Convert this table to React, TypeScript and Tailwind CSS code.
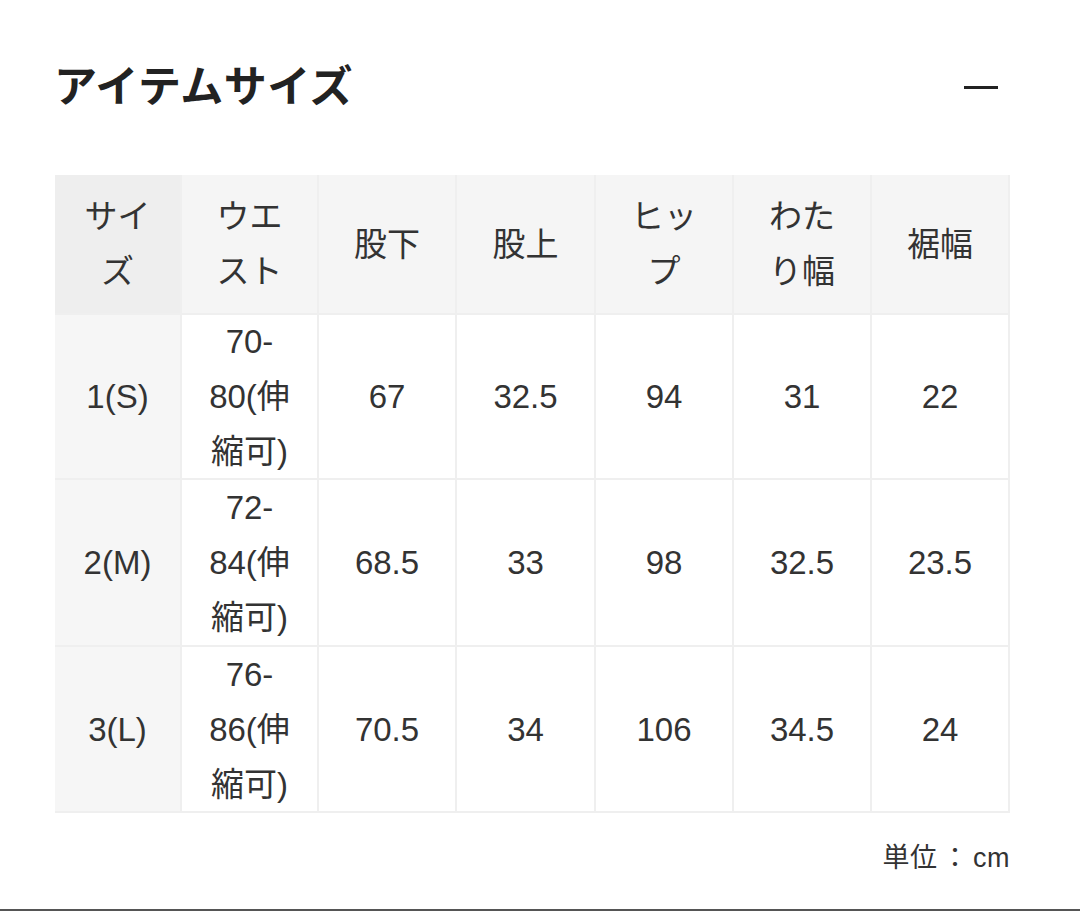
import React from "react";

const FONT = { fontFamily: '"Liberation Sans", "Noto Sans CJK JP", sans-serif' };

const headers: React.ReactNode[] = [
  <>サイ<br />ズ</>,
  <>ウエ<br />スト</>,
  <>股下</>,
  <>股上</>,
  <>ヒッ<br />プ</>,
  <>わた<br />り幅</>,
  <>裾幅</>,
];

const rows: React.ReactNode[][] = [
  ["1(S)", <>70-<br />80(伸<br />縮可)</>, "67", "32.5", "94", "31", "22"],
  ["2(M)", <>72-<br />84(伸<br />縮可)</>, "68.5", "33", "98", "32.5", "23.5"],
  ["3(L)", <>76-<br />86(伸<br />縮可)</>, "70.5", "34", "106", "34.5", "24"],
];

const rowHeights = ["h-[163px]", "h-[165px]", "h-[164px]"];

export default function App() {
  return (
    <div className="w-[1080px] h-[913px] bg-white text-[#222] overflow-hidden" style={FONT}>
      <div className="pt-[58px] ml-[55px] w-[955px]">
        <div className="flex items-center justify-between h-[58px]">
          <h1 className="text-[43px] font-bold leading-none tracking-[0.5px] text-[#222] -ml-[1px]">
            アイテムサイズ
          </h1>
          <div className="w-[34px] h-[3px] bg-[#222] mr-[12px]" />
        </div>

        <div className="mt-[59px] grid grid-cols-[125px_135px_136px_137px_136px_136px_136px] gap-[2px] pb-[2px] bg-[#efefef] w-[955px] text-[#333] text-[33px] leading-[55px]">
          {headers.map((h, i) => (
            <div
              key={i}
              className={`h-[138px] flex items-center justify-center text-center ${i === 0 ? "bg-[#eeeeee]" : "bg-[#f5f5f5]"}`}
            >
              <div>{h}</div>
            </div>
          ))}
          {rows.map((r, ri) =>
            r.map((c, ci) => (
              <div
                key={`${ri}-${ci}`}
                className={`${rowHeights[ri]} flex items-center justify-center text-center ${ci === 0 ? "bg-[#f6f6f6]" : "bg-white"}`}
              >
                <div>{c}</div>
              </div>
            ))
          )}
        </div>

        <div className="mt-[27px] h-[36px] flex items-center justify-end text-[27px] tracking-[0.5px] text-[#333]">
          単位<span className="mx-[4px]">：</span>cm
        </div>
      </div>
      <div className="mt-[33px] h-[2px] bg-[#555]" />
    </div>
  );
}
